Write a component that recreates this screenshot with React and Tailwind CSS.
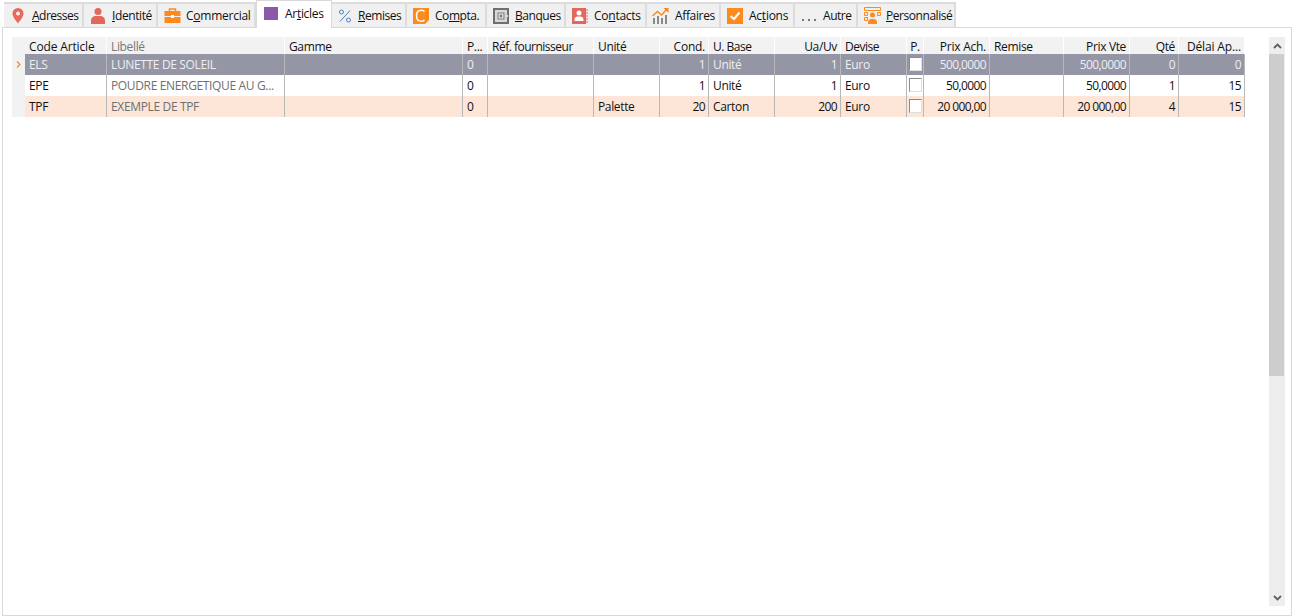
const gridCols = "grid-cols-[13px_82px_178px_178px_25px_106px_66px_49px_66px_66px_66px_17px_66px_74px_66px_49px_66px]";

function PinIcon() {
  return (
    <svg width="16" height="18" viewBox="0 0 16 18">
      <path d="M8 1a5.500 5.500 0 0 0-5.500 5.500C2.500 10 6 13.500 8 16.500c2-3 5.500-6.500 5.500-10A5.500 5.500 0 0 0 8 1z" fill="#e8695c" />
      <circle cx="8" cy="6.500" r="2" fill="#f6f0ee" />
    </svg>
  );
}

function PersonIcon() {
  return (
    <svg width="16" height="18" viewBox="0 0 16 18">
      <circle cx="8" cy="4.500" r="3.500" fill="#e2695a" />
      <path d="M1 17v-3.500C1 10.500 3.500 9 5.500 9h5c2 0 4.500 1.500 4.500 4.500V17z" fill="#e2695a" />
    </svg>
  );
}

function BriefcaseIcon() {
  return (
    <svg width="17" height="16" viewBox="0 0 17 16">
      <path d="M5.500 3V1h6v2" fill="none" stroke="#ff8a1c" strokeWidth="1.500" />
      <rect x="0.500" y="3" width="16" height="5" fill="#ff8a1c" />
      <rect x="0.500" y="9" width="16" height="6" fill="#ff8a1c" />
      <rect x="7" y="7" width="3" height="3" fill="#fff" />
    </svg>
  );
}

function SquareIcon() {
  return <div className="w-[14px] h-[13px] shrink-0 bg-[#8b59a8]"></div>;
}

function PercentIcon() {
  return (
    <svg width="14" height="14" viewBox="0 0 14 14" fill="none" stroke="#4b82c4" strokeWidth="1">
      <circle cx="3.500" cy="3" r="2" />
      <circle cx="10.500" cy="11" r="2" />
      <path d="M12 1.500 2 12.500" />
    </svg>
  );
}

function ComptaIcon() {
  return (
    <svg width="16" height="16" viewBox="0 0 16 16">
      <path d="M0 0h16v12l-4 4H0z" fill="#ff8a1c" />
      <path d="M11.500 3.500C10.500 2.700 9.500 2.300 8.300 2.300 5.300 2.300 3.500 4.600 3.500 7.800S5.300 13.300 8.300 13.300c1.200 0 2.200-.4 3.200-1.200" fill="none" stroke="#fff" strokeWidth="1.500" />
    </svg>
  );
}

function SafeIcon() {
  return (
    <svg width="16" height="16" viewBox="0 0 16 16">
      <rect width="16" height="16" fill="#6f6f6f" />
      <rect x="2" y="2" width="12" height="12" fill="#d8d8d8" />
      <rect x="5" y="5" width="6" height="6" fill="none" stroke="#808080" />
      <circle cx="8" cy="8" r="1.200" fill="#6f6f6f" />
      <rect x="13" y="7" width="2" height="2" fill="#d8d8d8" />
    </svg>
  );
}

function ContactIcon() {
  return (
    <svg width="16" height="16" viewBox="0 0 16 16">
      <rect width="14" height="16" fill="#e2685c" />
      <path d="M15 1v14" stroke="#e2685c" strokeDasharray="2 1" />
      <circle cx="7" cy="5" r="2.500" fill="#fff" />
      <path d="M2.500 13v-1.500C2.500 9.500 4 8.500 5.500 8.500h3c1.500 0 3 1 3 3V13z" fill="#fff" />
    </svg>
  );
}

function ChartIcon() {
  return (
    <svg width="17" height="17" viewBox="0 0 17 17">
      <rect x="1" y="11" width="2" height="6" fill="#8a8a8a" />
      <rect x="5" y="9" width="2" height="8" fill="#8a8a8a" />
      <rect x="9" y="11" width="2" height="6" fill="#8a8a8a" />
      <rect x="13" y="8" width="2" height="9" fill="#8a8a8a" />
      <path d="M0.500 9 5.500 4.500 9.500 8 15 2" fill="none" stroke="#f58a1f" strokeWidth="1.500" />
      <path d="M11.500 1H16.500V6z" fill="#f58a1f" />
    </svg>
  );
}

function CheckIcon() {
  return (
    <svg width="16" height="16" viewBox="0 0 16 16">
      <rect width="16" height="16" fill="#ff8a1c" />
      <path d="M3.500 8 7 11 12.500 4.500" fill="none" stroke="#fff" strokeWidth="2" />
    </svg>
  );
}

function DotsIcon() {
  return (
    <svg width="16" height="16" viewBox="0 0 16 16" fill="#777">
      <rect x="1" y="11" width="2" height="2" />
      <rect x="7" y="11" width="2" height="2" />
      <rect x="13" y="11" width="2" height="2" />
    </svg>
  );
}

function CustomIcon() {
  return (
    <svg width="17" height="17" viewBox="0 0 17 17">
      <path d="M0.500 0.500h16v3h-16zM0.500 5.500h3v3h-3zM0.500 10.500h3v3h-3zM13.500 5.500h3v3h-3z" fill="none" stroke="#ff8a1c" />
      <circle cx="8.500" cy="8" r="2.500" fill="#ff8a1c" />
      <path d="M4 17v-2c0-2 2-3 3-3h3c1 0 3 1 3 3v2z" fill="#ff8a1c" />
    </svg>
  );
}

const tabs = [
  { w: "w-[80px]", icon: <PinIcon />, gap: "pl-[6px] gap-[6px]", track: "tracking-[-0.5px]", label: <><u>A</u>dresses</> },
  { w: "w-[74px]", icon: <PersonIcon />, gap: "pl-[6px] gap-[6px]", track: "tracking-[-0.4px]", label: <><u>I</u>dentité</> },
  { w: "w-[98px]", icon: <BriefcaseIcon />, gap: "pl-[6px] gap-[5px]", track: "tracking-[-0.25px]", label: <>C<u>o</u>mmercial</> },
  { w: "w-[76px]", icon: <SquareIcon />, gap: "pl-[7px] gap-[7px]", track: "tracking-[-0.3px]", label: <>Ar<u>t</u>icles</>, active: true },
  { w: "w-[75px]", icon: <PercentIcon />, gap: "pl-[6px] gap-[6px]", track: "tracking-[-0.45px]", label: <><u>R</u>emises</> },
  { w: "w-[80px]", icon: <ComptaIcon />, gap: "pl-[6px] gap-[6px]", track: "tracking-[-0.45px]", label: <>Co<u>m</u>pta.</> },
  { w: "w-[79px]", icon: <SafeIcon />, gap: "pl-[6px] gap-[6px]", track: "tracking-[-0.45px]", label: <><u>B</u>anques</> },
  { w: "w-[81px]", icon: <ContactIcon />, gap: "pl-[6px] gap-[6px]", track: "tracking-[-0.25px]", label: <>Co<u>n</u>tacts</> },
  { w: "w-[74px]", icon: <ChartIcon />, gap: "pl-[5px] gap-[6px]", track: "tracking-[-0.35px]", label: "Affaires" },
  { w: "w-[74px]", icon: <CheckIcon />, gap: "pl-[6px] gap-[6px]", track: "tracking-[-0.25px]", label: <>Ac<u>t</u>ions</> },
  { w: "w-[63px]", icon: <DotsIcon />, gap: "pl-[6px] gap-[6px]", track: "tracking-[-0.45px]", label: "Autre" },
  { w: "w-[98px]", icon: <CustomIcon />, gap: "pl-[6px] gap-[5px]", track: "tracking-[-0.45px]", label: <><u>P</u>ersonnalisé</> },
];

// align: l = left, r = right
const columns = [
  { title: "Code Article", align: "l", track: "tracking-[-0.15px]" },
  { title: "Libellé", align: "l", dim: true },
  { title: "Gamme", align: "l" },
  { title: "P...", align: "l" },
  { title: "Réf. fournisseur", align: "l", track: "tracking-[-0.5px]" },
  { title: "Unité", align: "l" },
  { title: "Cond.", align: "r", track: "tracking-[-0.25px]" },
  { title: "U. Base", align: "l", track: "tracking-[-0.5px]" },
  { title: "Ua/Uv", align: "r" },
  { title: "Devise", align: "l", track: "tracking-[-0.5px]" },
  { title: "P.", align: "c" },
  { title: "Prix Ach.", align: "r", track: "tracking-[-0.25px]" },
  { title: "Remise", align: "l" },
  { title: "Prix Vte", align: "r" },
  { title: "Qté", align: "r" },
  { title: "Délai Ap...", align: "r", track: "tracking-[-0.15px]" },
];

const rows = [
  { kind: "selected", cells: ["ELS", "LUNETTE DE SOLEIL", "", "0", "", "", "1", "Unité", "1", "Euro", null, "500,0000", "", "500,0000", "0", "0"] },
  { kind: "plain", cells: ["EPE", "POUDRE ENERGETIQUE AU G...", "", "0", "", "", "1", "Unité", "1", "Euro", null, "50,0000", "", "50,0000", "1", "15"] },
  { kind: "peach", cells: ["TPF", "EXEMPLE DE TPF", "", "0", "", "Palette", "20", "Carton", "200", "Euro", null, "20 000,00", "", "20 000,00", "4", "15"] },
];

const rowBg = { selected: "bg-[#9496a6]", plain: "bg-white", peach: "bg-[#fde6d8]" };
const rowText = { selected: "text-[#eeeef2]", plain: "text-[#111]", peach: "text-[#111]" };

function Tab({ tab }) {
  if (tab.active) {
    return (
      <div className={`${tab.w} h-[28px] -mb-px flex items-center pb-[2px] bg-white border-x border-t border-[#d9d9d9] [&>svg]:shrink-0 ${tab.gap} ${tab.track}`}>
        {tab.icon}
        <span>{tab.label}</span>
      </div>
    );
  }
  return (
    <div className={`${tab.w} h-[25px] mt-[2px] flex items-center bg-[#f0f0f0] border-t-2 border-r-2 border-[#dcdcdc] [&>svg]:shrink-0 ${tab.gap} ${tab.track}`}>
      {tab.icon}
      <span className="whitespace-nowrap">{tab.label}</span>
    </div>
  );
}

function Checkbox() {
  return <div className="w-[13px] h-[14px] mt-[3px] bg-white border border-[#8c8c8c] border-r-[#dedede] border-b-[#dedede]"></div>;
}

function Grid() {
  return (
    <div className="w-[1233px]">
      <div className={`grid ${gridCols} h-[17px] bg-[#f2f2f2]`}>
        <div></div>
        {columns.map((col) => (
          <div
            key={col.title}
            className={`overflow-hidden whitespace-nowrap leading-[19px] border-r border-white ${col.track || ""} ${col.align === "r" ? "text-right pr-[3px]" : col.align === "c" ? "text-center" : "pl-[4px]"} ${col.dim ? "text-[#777]" : "text-[#111]"}`}
          >
            {col.title}
          </div>
        ))}
      </div>
      {rows.map((row) => (
        <div key={row.cells[0]} className={`grid ${gridCols} h-[21px]`}>
          <div className="bg-[#f2f2f2] flex items-center justify-center">
            {row.kind === "selected" && (
              <svg width="5" height="7" viewBox="0 0 5 7">
                <path d="M1 0.500 4 3.500 1 6.500" fill="none" stroke="#f58a1f" strokeWidth="1.200" />
              </svg>
            )}
          </div>
          {row.cells.map((cell, i) => {
            const col = columns[i];
            const color = i === 1 && row.kind !== "selected" ? "text-[#6f6f6f]" : rowText[row.kind];
            if (cell === null) {
              return (
                <div key={col.title} className={`border-r border-[#b8b8b8] pl-[2px] ${rowBg[row.kind]}`}>
                  <Checkbox />
                </div>
              );
            }
            return (
              <div
                key={col.title}
                className={`overflow-hidden whitespace-nowrap leading-[21px] border-r border-[#b8b8b8] ${rowBg[row.kind]} ${color} ${col.align === "r" ? "text-right pr-[3px] tracking-[-0.6px]" : "pl-[4px]"}`}
              >
                {cell}
              </div>
            );
          })}
        </div>
      ))}
    </div>
  );
}

function Scrollbar() {
  return (
    <div className="w-[16px] h-[569px] ml-[24px] bg-[#eeeeee] flex flex-col">
      <div className="h-[17px] flex items-center justify-center">
        <svg width="9" height="6" viewBox="0 0 9 6">
          <path d="M1 5 4.500 1.500 8 5" fill="none" stroke="#606060" strokeWidth="1.800" />
        </svg>
      </div>
      <div className="w-[15px] h-[322px] bg-[#cdcdcd]"></div>
      <div className="flex-1"></div>
      <div className="h-[17px] flex items-center justify-center">
        <svg width="9" height="6" viewBox="0 0 9 6">
          <path d="M1 1 4.500 4.500 8 1" fill="none" stroke="#606060" strokeWidth="1.800" />
        </svg>
      </div>
    </div>
  );
}

export default function App() {
  return (
    <div className="w-[1293px] h-[616px] bg-white overflow-hidden text-[12px] text-[#111] font-['Open_Sans','Liberation_Sans',sans-serif] tracking-[-0.35px]">
      <div className="flex h-[27px] pl-[4px] relative z-10">
        {tabs.map((tab, i) => (
          <Tab key={i} tab={tab} />
        ))}
      </div>
      <div className="ml-[2px] mr-[1px] h-[589px] border border-[#d9d9d9] pl-[9px] pt-[9px] flex items-start">
        <Grid />
        <Scrollbar />
      </div>
    </div>
  );
}
